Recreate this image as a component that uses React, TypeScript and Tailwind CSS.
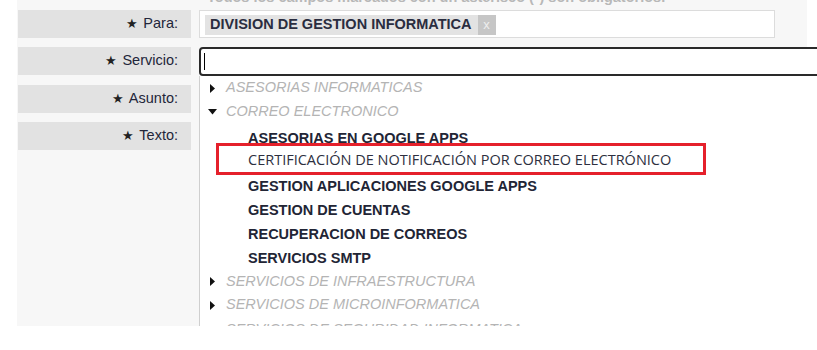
import React from "react";

const font = { fontFamily: '"Liberation Sans", Arial, sans-serif' };

function Label({ text, className }: { text: string; className?: string }) {
  return (
    <div
      className={`h-[28px] shrink-0 w-[173px] ml-[1px] bg-[#e2e2e2] flex items-center justify-end pr-[13px] text-[14.5px] text-[#23263a] ${className ?? ""}`}
    >
      <span className="text-[13px] mr-[5px] text-[#222]">★</span>
      {text}
    </div>
  );
}

function Tri({ down }: { down?: boolean }) {
  return down ? (
    <svg width="9" height="6" viewBox="0 0 9 6" className="mr-[9px] ml-[8px]">
      <path d="M0 0 L9 0 L4.5 5.5 Z" fill="#111" />
    </svg>
  ) : (
    <svg width="9" height="9" viewBox="0 0 9 9" className="mr-[9px] ml-[8px]">
      <path d="M2 0 L7 4.5 L2 9 Z" fill="#111" />
    </svg>
  );
}

function Group({ text, down, h }: { text: string; down?: boolean; h: string }) {
  return (
    <div className={`${h} shrink-0 flex items-center`}>
      <Tri down={down} />
      <span className="italic text-[14.5px] text-[#b4b4b4]">{text}</span>
    </div>
  );
}

function Child({ text, h }: { text: string; h: string }) {
  return (
    <div className={`${h} shrink-0 flex items-center pl-[48px] text-[14.5px] font-bold text-[#222535]`}>
      {text}
    </div>
  );
}

export default function App() {
  return (
    <div className="w-[817px] h-[350px] bg-white" style={font}>
      <div className="relative w-[817px] h-[326px] overflow-hidden">
        <div className="absolute left-[17px] top-0 w-[790px] h-[326px] bg-[#f7f7f7]" />
        <div className="relative flex h-full pl-[17px]">
          {/* labels */}
          <div className="w-[182px] shrink-0 flex flex-col pt-[10px]">
            <Label text="Para:" />
            <Label text="Servicio:" className="mt-[9px]" />
            <Label text="Asunto:" className="mt-[10px]" />
            <Label text="Texto:" className="mt-[9px]" />
          </div>
          {/* fields */}
          <div className="flex-1 flex flex-col min-w-0">
            <div className="h-[10px] shrink-0 relative">
              <p className="absolute left-[8px] top-[-13px] whitespace-nowrap text-[14.5px] font-bold text-[#b8b8b8]">
                Todos los campos marcados con un asterisco (*) son obligatorios.
              </p>
            </div>
            <div className="w-[576px] h-[28px] shrink-0 bg-white border border-[#dcdcdc] flex items-center pl-[5px]">
              <div className="h-[20px] mt-[1px] bg-[#e3e3e3] flex items-center pl-[5px] text-[14.5px] font-bold text-[#2a2d40]">
                DIVISION DE GESTION INFORMATICA
                <span className="ml-[6px] h-[20px] w-[18px] bg-[#c6c6c6] text-[#eeeeee] text-[13px] font-normal flex items-center justify-center">
                  x
                </span>
              </div>
            </div>
            <div className="mt-[9px] shrink-0 w-[640px] h-[29px] bg-white border-2 border-[#2a2a2a] rounded-tl-[4px] rounded-bl-[4px] flex items-center pl-[3px]">
              <div className="w-[1px] h-[17px] bg-black" />
            </div>
            <div className="w-[640px] flex-1 min-h-0 bg-white border-l border-[#cfcfcf] flex flex-col">
              <Group text="ASESORIAS INFORMATICAS" h="h-[24px]" />
              <Group text="CORREO ELECTRONICO" down h="h-[24px]" />
              <Child text="ASESORIAS EN GOOGLE APPS" h="h-[24px] pt-[5px]" />
              <div className="h-[24px] shrink-0 relative flex items-center pl-[48px]">
                <div className="absolute left-[16px] top-[-5px] w-[490px] h-[32px] border-[3px] border-[#e5202b]" />
                <span
                  className="text-[14.5px] text-[#2d2f40]"
                  style={{ fontFamily: '"Open Sans", "Noto Sans", sans-serif' }}
                >
                  CERTIFICACIÓN DE NOTIFICACIÓN POR CORREO ELECTRÓNICO
                </span>
              </div>
              <Child text="GESTION APLICACIONES GOOGLE APPS" h="h-[26px] pt-[4px]" />
              <Child text="GESTION DE CUENTAS" h="h-[24px] pt-[2px]" />
              <Child text="RECUPERACION DE CORREOS" h="h-[24px] pt-[2px]" />
              <Child text="SERVICIOS SMTP" h="h-[23px] pt-[2px]" />
              <Group text="SERVICIOS DE INFRAESTRUCTURA" h="h-[24px] pt-[1px]" />
              <Group text="SERVICIOS DE MICROINFORMATICA" h="h-[23px] pt-[1px]" />
              <Group text="SERVICIOS DE SEGURIDAD INFORMATICA" h="h-[24px] pt-[4px]" />
            </div>
          </div>
        </div>
      </div>
    </div>
  );
}
